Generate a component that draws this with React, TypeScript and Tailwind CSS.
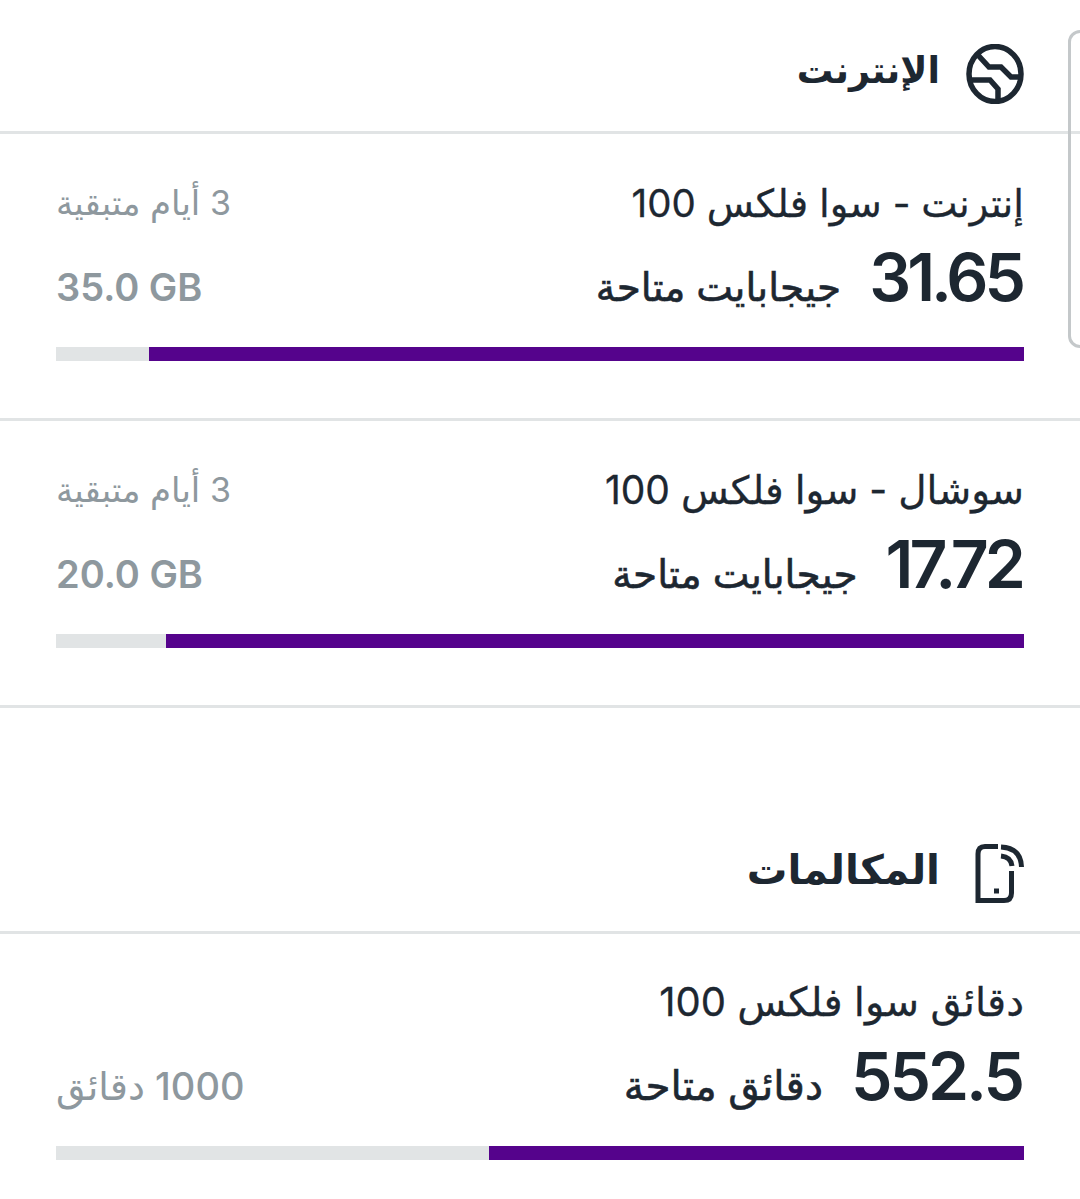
import React from "react";

const arabic = "font-['Inter','DejaVu_Sans',sans-serif]";

function Globe() {
  return (
    <svg width="58" height="60" viewBox="0 0 58 60" fill="none" stroke="#1d2731" strokeWidth="5.5">
      <ellipse cx="29" cy="30" rx="26" ry="27.5" />
      <path d="M11 10 L23 23 H35 L45 33 H55" />
      <path d="M3 36 H24 L32 45 V57" />
    </svg>
  );
}

function Phone() {
  return (
    <svg width="50" height="60" viewBox="0 0 50 60" fill="none" stroke="#1d2731" strokeWidth="5">
      <path d="M24 2.5 H11 Q4 2.5 4 10 V56.5 H30 Q37.5 56.5 37.5 49 V27" />
      <path d="M27 3 Q47 4 47.5 23" />
      <path d="M27 12 Q37 13 38 22" />
      <rect x="20" y="44.5" width="5" height="5" fill="#1d2731" stroke="none" />
    </svg>
  );
}

function Usage(props: {
  title: string;
  titleClass: string;
  value: string;
  valueClass: string;
  unit: string;
  unitClass: string;
  side: string;
  total: string;
  totalClass: string;
  pct: number;
  last?: boolean;
}) {
  return (
    <div className={`flex flex-col px-[56px] ${props.last ? "h-[267px] pt-[44px]" : "h-[287px] pt-[45px] border-b-[3px] border-[#e1e4e5]"}`}>
      <div className="flex items-center justify-between h-[48px]">
        <div className={`${arabic} ${props.titleClass} leading-[48px] text-[#1d2731] [-webkit-text-stroke:0.3px_#1d2731]`}>{props.title}</div>
        {props.side ? <div className={`${arabic} text-[34px] leading-[48px] text-[#8e989e]`}>{props.side}</div> : null}
      </div>
      <div className="flex items-center justify-between mt-[16px] h-[68px]">
        <div className="flex items-center gap-[28px] mr-[2px]">
          <span dir="ltr" className={`${arabic} ${props.valueClass} text-[66px] leading-[68px] font-semibold text-[#1d2731]`}>{props.value}</span>
          <span className={`${arabic} ${props.unitClass} leading-[48px] text-[#1d2731] mt-[20px] [-webkit-text-stroke:0.6px_#1d2731]`}>{props.unit}</span>
        </div>
        {props.total ? (
          <span dir={props.total.includes("GB") ? "ltr" : "rtl"} className={`${arabic} ${props.totalClass} text-[38px] leading-[48px] text-[#8e989e] mt-[20px]`}>{props.total}</span>
        ) : null}
      </div>
      <div className="h-[14px] mt-[36px] bg-[#e1e4e5] flex shrink-0">
        <div className="h-full bg-[#55038c]" style={{ width: `${props.pct}%` }} />
      </div>
    </div>
  );
}

function Heading(props: { icon: React.ReactNode; title: string; titleClass: string; iconClass: string }) {
  return (
    <div className="flex items-center h-[134px] pt-[8px] px-[56px] border-b-[3px] border-[#e1e4e5]">
      <div className={`w-[84px] shrink-0 flex justify-start ${props.iconClass}`}>{props.icon}</div>
      <h2 className={`${arabic} ${props.titleClass} leading-[56px] font-bold text-[#1d2731]`}>{props.title}</h2>
    </div>
  );
}

export default function App() {
  return (
    <div dir="rtl" className="relative w-[1080px] h-[1199px] overflow-hidden bg-white">
      <div className="absolute left-[1068px] top-[30px] w-[40px] h-[318px] rounded-[12px] border-[3px] border-[#c4c8ca]" />
      <Heading icon={<Globe />} title="الإنترنت" titleClass="text-[36.5px]" iconClass="mt-[8px]" />
      <Usage title="إنترنت - سوا فلكس 100" titleClass="text-[38.5px]" value="31.65" valueClass="tracking-[-4px]" unit="جيجابايت متاحة" unitClass="text-[39px]" side="3 أيام متبقية" total="35.0 GB" totalClass="font-semibold" pct={90.43} />
      <Usage title="سوشال - سوا فلكس 100" titleClass="text-[39px]" value="17.72" valueClass="tracking-[-4px]" unit="جيجابايت متاحة" unitClass="text-[39px]" side="3 أيام متبقية" total="20.0 GB" totalClass="font-semibold" pct={88.6} />
      <div className="h-[92px]" />
      <Heading icon={<Phone />} title="المكالمات" titleClass="text-[40.5px]" iconClass="mt-[8px]" />
      <Usage title="دقائق سوا فلكس 100" titleClass="text-[40px]" value="552.5" valueClass="tracking-[-3px]" unit="دقائق متاحة" unitClass="text-[40.5px]" side="" total="1000 دقائق" totalClass="font-medium" pct={55.25} last />
    </div>
  );
}
